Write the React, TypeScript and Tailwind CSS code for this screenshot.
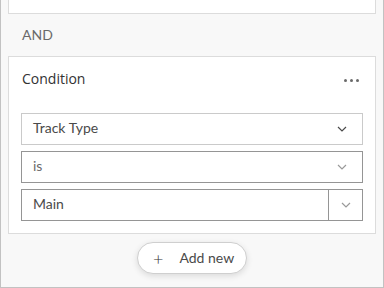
import React from "react";

const Chevron = ({ color }: { color: string }) => (
  <svg width="10" height="6" viewBox="0 0 10 6" fill="none">
    <path d="M1 1l4 4 4-4" stroke={color} strokeWidth="1.2" />
  </svg>
);

export default function App() {
  return (
    <div
      className="w-[384px] h-[288px] bg-[#f8f8f8] border-l border-r border-b border-[#c2c2c2] overflow-hidden px-[7px] flex flex-col"
      style={{ fontFamily: "Lato, 'Noto Sans', sans-serif" }}
    >
      <div className="h-[14px] shrink-0 bg-white border border-t-0 border-[#dcdcdc]" />
      <div className="h-[42px] shrink-0 flex items-center pl-[14px] pb-[2px] text-[14px] text-[#6a6a6a]">AND</div>
      <div className="shrink-0 h-[178px] bg-white border border-[#dcdcdc] px-[12px] flex flex-col">
        <div className="h-[56px] shrink-0 flex items-start justify-between pl-[1px] pr-[4px] pt-[12px]">
          <span className="text-[14px] leading-[20px] font-medium text-[#323232]" style={{ fontFamily: "'Open Sans', sans-serif" }}>Condition</span>
          <span className="flex gap-[3px] items-center h-[20px] pt-[2px]">
            <span className="w-[3px] h-[3px] rounded-full bg-[#6a6a6a]" />
            <span className="w-[3px] h-[3px] rounded-full bg-[#6a6a6a]" />
            <span className="w-[3px] h-[3px] rounded-full bg-[#6a6a6a]" />
          </span>
        </div>
        <div className="flex flex-col gap-[6px]">
          <div className="h-[32px] border border-[#cacaca] flex items-center justify-between pl-[11px] pr-[15px] text-[14px] text-[#4a4a4a]">
            <span className="pb-[3px]">Track Type</span>
            <Chevron color="#4a4a4a" />
          </div>
          <div className="h-[32px] border border-[#959595] flex items-center justify-between pl-[11px] pr-[15px] text-[14px] text-[#6a6a6a]">
            <span className="pb-[3px]">is</span>
            <Chevron color="#9a9a9a" />
          </div>
          <div className="h-[32px] border border-[#959595] flex items-stretch text-[14px] text-[#4a4a4a]">
            <span className="flex-1 flex items-center pl-[11px] pb-[4px]">Main</span>
            <span className="w-[34px] border-l border-[#959595] flex items-center justify-center">
              <Chevron color="#9a9a9a" />
            </span>
          </div>
        </div>
      </div>
      <div className="flex justify-center pt-[8px]">
        <div className="h-[32px] w-[110px] rounded-full bg-white border border-[#cfcfcf] shadow-[0_2px_6px_rgba(0,0,0,0.12)] flex items-center pl-[15px] pb-[2px] text-[14px] text-[#4a4a4a]">
          <span className="text-[18px] font-light text-[#323232] leading-none mr-[16px] pt-[2px]">+</span>
          <span>Add new</span>
        </div>
      </div>
    </div>
  );
}
